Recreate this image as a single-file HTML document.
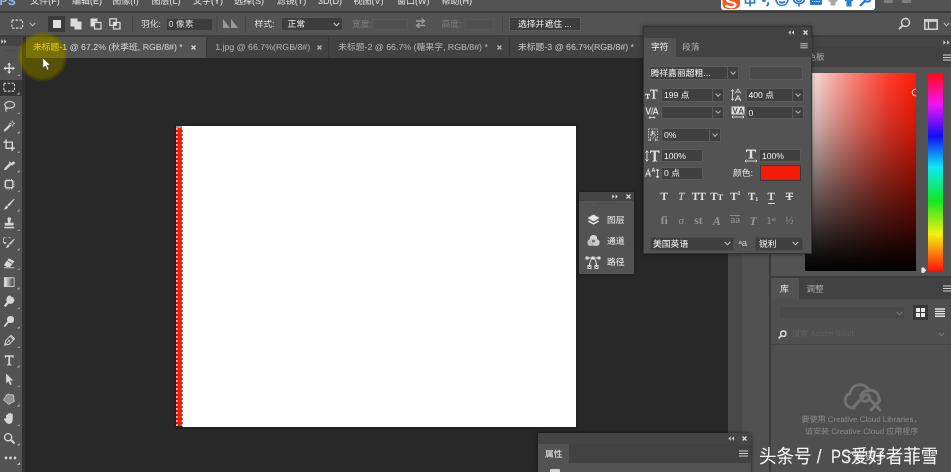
<!DOCTYPE html>
<html lang="zh-CN"><head><meta charset="utf-8"><title>Photoshop</title>
<style>
html,body{margin:0;padding:0;background:#282828;}
body{text-rendering:geometricPrecision;-webkit-font-smoothing:antialiased;width:951px;height:472px;overflow:hidden;font-family:"Liberation Sans","Noto Sans CJK SC",sans-serif;}
#app{filter:blur(0.45px);position:relative;width:951px;height:472px;overflow:hidden;background:#282828;}
.a{position:absolute;box-sizing:border-box;}
.t{white-space:nowrap;}
svg{display:inline-block;}
.fld{background:#424242;border:1px solid #666;}

</style></head>
<body>
<div id="app">
<div class="a " style="left:0px;top:0px;width:951px;height:472px;background:#282828;"></div>
<div class="a " style="left:174px;top:124px;width:404.5px;height:305px;background:#232323;"></div>
<div class="a " style="left:182px;top:126px;width:394px;height:300.6px;background:#ffffff;"></div>
<div class="a " style="left:176px;top:126.3px;width:6.2px;height:1.4px;background:#9a9a9a;"></div>
<div class="a " style="left:176px;top:127.6px;width:6.2px;height:298.9px;background:#f41d0a;"></div>
<svg class="a" style="left:175.500px;top:126.500px" width="8" height="301" viewBox="0 0 8 301"><path d="M0.900 1V301" stroke="#fff" stroke-width="1.200" stroke-dasharray="2 2" fill="none" opacity=".9"/><path d="M6.200 1V301" stroke="#ffe8e4" stroke-width="1.200" stroke-dasharray="2 2" fill="none" opacity=".85"/><path d="M0.900 3V301" stroke="#4a1008" stroke-width="1.200" stroke-dasharray="2 2" fill="none" opacity=".6"/><path d="M6.200 3V301" stroke="#5a1408" stroke-width="1.200" stroke-dasharray="2 2" fill="none" opacity=".7"/></svg>
<div class="a " style="left:0px;top:0px;width:951px;height:11px;background:#535353;"></div>
<div class="a " style="left:0px;top:11px;width:951px;height:1.5px;background:#3c3c3c;"></div>
<div class="a t" style="left:-0.500px;top:-6.500px;font-size:12px;font-weight:bold;color:#8fb8e8;line-height:14px;height:14px;letter-spacing:0.300px">PS</div>
<div class="a t " style="left:30.3px;top:-6.4px;height:14px;line-height:14px;font-size:9px;color:#e4e4e4;">文件(F)</div>
<div class="a t " style="left:72px;top:-6.4px;height:14px;line-height:14px;font-size:9px;color:#e4e4e4;">编辑(E)</div>
<div class="a t " style="left:112.3px;top:-6.4px;height:14px;line-height:14px;font-size:9px;color:#e4e4e4;">图像(I)</div>
<div class="a t " style="left:151.4px;top:-6.4px;height:14px;line-height:14px;font-size:9px;color:#e4e4e4;">图层(L)</div>
<div class="a t " style="left:193px;top:-6.4px;height:14px;line-height:14px;font-size:9px;color:#e4e4e4;">文字(Y)</div>
<div class="a t " style="left:234px;top:-6.4px;height:14px;line-height:14px;font-size:9px;color:#e4e4e4;">选择(S)</div>
<div class="a t " style="left:276.8px;top:-6.4px;height:14px;line-height:14px;font-size:9px;color:#e4e4e4;">滤镜(T)</div>
<div class="a t " style="left:318px;top:-6.4px;height:14px;line-height:14px;font-size:9px;color:#e4e4e4;">3D(D)</div>
<div class="a t " style="left:353.6px;top:-6.4px;height:14px;line-height:14px;font-size:9px;color:#e4e4e4;">视图(V)</div>
<div class="a t " style="left:397px;top:-6.4px;height:14px;line-height:14px;font-size:9px;color:#e4e4e4;">窗口(W)</div>
<div class="a t " style="left:441.6px;top:-6.4px;height:14px;line-height:14px;font-size:9px;color:#e4e4e4;">帮助(H)</div>
<div class="a " style="left:721px;top:-3px;width:154px;height:12.5px;background:#ffffff;border-radius:3px;"></div>
<svg class="a" style="left:721px;top:-8.500px" width="154" height="18" viewBox="0 0 154 18"><rect x="1.500" y="-2" width="17.500" height="19" rx="5" fill="#f4581c"/><path d="M14.500 5.500C11 3.500 5.500 4.500 6 8C6.500 11 14 9.500 14.500 12.500C15 15.500 8 16 4.500 13.500" fill="none" stroke="#fff" stroke-width="2.200"/><g fill="none" stroke="#2b78d0" stroke-width="1.700"><path d="M24.500 5H33.500V11H24.500ZM29 1V14.500"/><circle cx="43" cy="8" r="1.200" fill="#2b78d0"/><path d="M47 10Q48 12.500 45.500 14" /><circle cx="61" cy="7.500" r="6"/><path d="M58 9.500Q61 12 64 9.500"/><path d="M75.500 2.500A2.500 2.500 0 0 1 80.500 2.500V7A2.500 2.500 0 0 1 75.500 7ZM72.500 6.500Q72.500 11.500 78 11.500Q83.500 11.500 83.500 6.500M78 11.500V14.500" /><rect x="89" y="4" width="12" height="9" rx="1" fill="#2b78d0" stroke="none"/><path d="M91 7H99M91 9.500H99" stroke="#fff" stroke-width="1" stroke-dasharray="1.200 1"/></g><path d="M107 8L110 6H114L117 8L115.500 10L114.500 9.500V13.500H109.500V9.500L108.500 10Z" fill="#a8a8a8"/><path d="M123 7L126 5H130L133 7L131.500 9.500L130.500 9V14.500H125.500V9L124.500 9.500Z" fill="#2b78d0"/><path d="M139 14L144 9" stroke="#2b78d0" stroke-width="2.400" fill="none"/><circle cx="146.500" cy="6.500" r="3.200" fill="none" stroke="#2b78d0" stroke-width="2"/></svg>
<div class="a " style="left:884px;top:-2px;width:9px;height:5px;background:#8a8a8a;border-radius:1px;opacity:.8"></div>
<div class="a " style="left:902px;top:-2px;width:9px;height:5px;background:#8a8a8a;border-radius:1px;opacity:.8"></div>
<div class="a " style="left:0px;top:12.5px;width:951px;height:22.5px;background:#535353;"></div>
<div class="a " style="left:0px;top:35px;width:951px;height:2px;background:#3e3e3e;"></div>
<svg class="a" style="left:11px;top:18.5px;" width="12.5" height="10.2" viewBox="0 0 14 11"><rect x="1" y="1" width="12" height="9" fill="none" stroke="#d8d8d8" stroke-width="1.3" stroke-dasharray="2.6 1.7"/></svg>
<svg class="a" style="left:29px;top:22px;" width="7" height="5" viewBox="0 0 7 5"><path d="M0.700 0.800L3.500 3.800L6.300 0.800" fill="none" stroke="#bdbdbd" stroke-width="1.100"/></svg>
<div class="a " style="left:48px;top:15.5px;width:16.5px;height:16.5px;background:#3a3a3a;"></div>
<div class="a " style="left:52.5px;top:19.5px;width:8px;height:8px;background:#e2e2e2;"></div>
<svg class="a" style="left:70px;top:18px;" width="12" height="12" viewBox="0 0 12 12"><path d="M0.500 0.500H7.500V3.500H11.500V11.500H4.500V8.500H0.500Z" fill="#dcdcdc"/></svg>
<svg class="a" style="left:90px;top:18px;" width="12" height="12" viewBox="0 0 12 12"><path d="M0.500 0.500H7.500V3.500H4.500V8.500H0.500Z" fill="#dcdcdc"/><rect x="4.500" y="4.500" width="6.500" height="6.500" fill="none" stroke="#dcdcdc" stroke-width="1.200"/></svg>
<svg class="a" style="left:108.5px;top:18px;" width="12" height="12" viewBox="0 0 12 12"><rect x="0.800" y="0.800" width="6.500" height="6.500" fill="none" stroke="#dcdcdc" stroke-width="1.200"/><rect x="4.500" y="4.500" width="6.500" height="6.500" fill="none" stroke="#dcdcdc" stroke-width="1.200"/><rect x="4.500" y="4.500" width="2.800" height="2.800" fill="#dcdcdc"/></svg>
<div class="a " style="left:132px;top:15px;width:1px;height:18px;background:#474747;"></div>
<div class="a " style="left:215.5px;top:15px;width:1px;height:18px;background:#474747;"></div>
<div class="a " style="left:244.5px;top:15px;width:1px;height:18px;background:#474747;"></div>
<div class="a " style="left:501.5px;top:15px;width:1px;height:18px;background:#474747;"></div>
<div class="a t " style="left:141px;top:17.3px;height:14px;line-height:14px;font-size:8.8px;color:#dddddd;">羽化:</div>
<div class="a " style="left:165.5px;top:18px;width:47.5px;height:12.5px;background:#3d3d3d;border:1px solid #525252;"></div>
<div class="a t " style="left:168.5px;top:17.3px;height:14px;line-height:14px;font-size:8.8px;color:#dddddd;">0 像素</div>
<svg class="a" style="left:223px;top:19px;" width="15" height="9" viewBox="0 0 15 9"><path d="M0 0L7 9H0Z" fill="#9a9a9a"/><path d="M8 0L15 9H8Z" fill="#9a9a9a"/></svg>
<div class="a t " style="left:254.5px;top:17.3px;height:14px;line-height:14px;font-size:8.8px;color:#dddddd;">样式:</div>
<div class="a " style="left:281px;top:16.5px;width:61.5px;height:14.5px;background:#3d3d3d;border:1px solid #565656;"></div>
<div class="a t " style="left:287.5px;top:17.3px;height:14px;line-height:14px;font-size:8.8px;color:#f0f0f0;">正常</div>
<svg class="a" style="left:333px;top:21.5px;" width="7" height="5" viewBox="0 0 7 5"><path d="M0.700 0.800L3.500 3.800L6.300 0.800" fill="none" stroke="#c8c8c8" stroke-width="1.100"/></svg>
<div class="a t " style="left:352px;top:17.3px;height:14px;line-height:14px;font-size:8.8px;color:#7c7c7c;">宽度:</div>
<div class="a " style="left:372px;top:18.5px;width:36px;height:11.5px;background:#515151;border:1px solid #585858;"></div>
<svg class="a" style="left:415px;top:18px;" width="11" height="10" viewBox="0 0 11 10"><path d="M1 3H9M6.500 0.500L9.500 3L6.500 5.500M10 7.500H2M4.500 5L1.500 7.500L4.500 10" fill="none" stroke="#9a9a9a" stroke-width="1.300"/></svg>
<div class="a t " style="left:441.5px;top:17.3px;height:14px;line-height:14px;font-size:8.8px;color:#7c7c7c;">高度:</div>
<div class="a " style="left:464.5px;top:18.5px;width:29px;height:11.5px;background:#515151;border:1px solid #585858;"></div>
<div class="a " style="left:509px;top:16.5px;width:72px;height:14px;background:#3d3d3d;border:1px solid #5c5c5c;"></div>
<div class="a t " style="left:518px;top:17.3px;height:14px;line-height:14px;font-size:8.8px;color:#f2f2f2;">选择并遮住 ...</div>
<svg class="a" style="left:898px;top:17px;" width="13" height="13" viewBox="0 0 13 13"><circle cx="7.500" cy="5.500" r="4" fill="none" stroke="#d6d6d6" stroke-width="1.500"/><path d="M4.700 8.500L1 12.200" stroke="#d6d6d6" stroke-width="1.800"/></svg>
<svg class="a" style="left:923.5px;top:18.5px;" width="14" height="11" viewBox="0 0 14 11"><rect x="0.800" y="0.800" width="12.400" height="9.400" fill="none" stroke="#d6d6d6" stroke-width="1.500"/><path d="M4.500 1V10" stroke="#d6d6d6" stroke-width="1.300"/><path d="M1 2H13" stroke="#d6d6d6" stroke-width="1.600"/></svg>
<svg class="a" style="left:943px;top:22px;" width="7" height="5" viewBox="0 0 7 5"><path d="M0.700 0.800L3.500 3.800L6.300 0.800" fill="none" stroke="#bdbdbd" stroke-width="1.100"/></svg>
<div class="a " style="left:25.5px;top:37px;width:926px;height:20.5px;background:#424242;"></div>
<div class="a " style="left:26px;top:37px;width:179.5px;height:20.5px;background:#535353;"></div>
<div class="a t tab" style="left:33px;top:40.3px;height:14px;line-height:14px;font-size:8.8px;color:#d6d6d6;">未标题-1 @ 67.2% (秋季班, RGB/8#) *</div>
<svg class="a" style="left:191px;top:44.8px;" width="5" height="5" viewBox="0 0 5 5"><path d="M0.500 0.500L4.500 4.500M4.500 0.500L0.500 4.500" stroke="#d6d6d6" stroke-width="1.300"/></svg>
<div class="a t tab" style="left:215.2px;top:40.3px;height:14px;line-height:14px;font-size:8.8px;color:#b4b4b4;">1.jpg @ 66.7%(RGB/8#)</div>
<svg class="a" style="left:317px;top:44.8px;" width="5" height="5" viewBox="0 0 5 5"><path d="M0.500 0.500L4.500 4.500M4.500 0.500L0.500 4.500" stroke="#b4b4b4" stroke-width="1.300"/></svg>
<div class="a t tab" style="left:338.2px;top:40.3px;height:14px;line-height:14px;font-size:8.8px;color:#b4b4b4;">未标题-2 @ 66.7% (糖果字, RGB/8#) *</div>
<svg class="a" style="left:496.5px;top:44.8px;" width="5" height="5" viewBox="0 0 5 5"><path d="M0.500 0.500L4.500 4.500M4.500 0.500L0.500 4.500" stroke="#b4b4b4" stroke-width="1.300"/></svg>
<div class="a t tab" style="left:518px;top:40.3px;height:14px;line-height:14px;font-size:8.8px;color:#c9c9c9;">未标题-3 @ 66.7%(RGB/8#) *</div>
<svg class="a" style="left:647.5px;top:44.8px;" width="5" height="5" viewBox="0 0 5 5"><path d="M0.500 0.500L4.500 4.500M4.500 0.500L0.500 4.500" stroke="#c9c9c9" stroke-width="1.300"/></svg>
<div class="a " style="left:205.5px;top:37px;width:1px;height:20.5px;background:#383838;"></div>
<div class="a " style="left:327.7px;top:37px;width:1px;height:20.5px;background:#383838;"></div>
<div class="a " style="left:508.5px;top:37px;width:1px;height:20.5px;background:#383838;"></div>
<div class="a " style="left:0px;top:37px;width:22.5px;height:435px;background:#535353;"></div>
<div class="a " style="left:22.3px;top:36.5px;width:3.2px;height:436px;background:#303030;"></div>
<div class="a " style="left:0px;top:36.5px;width:22.5px;height:9.2px;background:#444444;"></div>
<svg class="a" style="left:0.8px;top:39.2px;" width="6" height="5" viewBox="0 0 6 5"><path d="M0.300 0.300L2.500 2.500L0.300 4.700ZM3.200 0.300L5.400 2.500L3.200 4.700Z" fill="#cfcfcf"/></svg>
<div class="a " style="left:4px;top:49.5px;width:14px;height:1px;background:#4c4c4c;"></div>
<div class="a " style="left:0px;top:79.5px;width:21.5px;height:16.5px;background:#373737;"></div>
<svg class="a" style="left:3px;top:62.3px;" width="12.4" height="12.4" viewBox="0 0 14 14"><path d="M7 0.500L9.300 3.200H7.800V6.200H10.800V4.700L13.500 7L10.800 9.300V7.800H7.800V10.800H9.300L7 13.500L4.700 10.800H6.200V7.800H3.200V9.300L0.500 7L3.200 4.700V6.200H6.200V3.200H4.700Z" fill="#d6d6d6"/></svg>
<svg class="a" style="left:17.3px;top:73.5px;" width="2.5" height="2.5" viewBox="0 0 3 3"><path d="M3 0V3H0Z" fill="#b4b4b4"/></svg>
<svg class="a" style="left:3px;top:80.8px;" width="12.4" height="12.4" viewBox="0 0 14 14"><rect x="1" y="2.500" width="12" height="9" fill="none" stroke="#d6d6d6" stroke-width="1.300" stroke-dasharray="2.600 1.700"/></svg>
<svg class="a" style="left:17.3px;top:92px;" width="2.5" height="2.5" viewBox="0 0 3 3"><path d="M3 0V3H0Z" fill="#b4b4b4"/></svg>
<svg class="a" style="left:3px;top:100.3px;" width="12.4" height="12.4" viewBox="0 0 14 14"><ellipse cx="7.500" cy="5.500" rx="5.500" ry="3.800" fill="none" stroke="#d6d6d6" stroke-width="1.400"/><path d="M3.500 8C2.500 9.500 3.500 11 4.500 10.500C5.500 10 4.500 8.500 3.500 9.500C2.500 10.500 3 12.500 4 13.500" fill="none" stroke="#d6d6d6" stroke-width="1.100"/></svg>
<svg class="a" style="left:17.3px;top:111.5px;" width="2.5" height="2.5" viewBox="0 0 3 3"><path d="M3 0V3H0Z" fill="#b4b4b4"/></svg>
<svg class="a" style="left:3px;top:119.8px;" width="12.4" height="12.4" viewBox="0 0 14 14"><path d="M1.500 12.500L8.500 5.500" stroke="#d6d6d6" stroke-width="2.400" fill="none"/><path d="M10.500 0.500V3M10.500 5V7.500M7 4H9.500M11.500 4H14M8.500 2L9.500 3M12.500 2L11.500 3M12.500 6L11.500 5" stroke="#d6d6d6" stroke-width="0.900"/></svg>
<svg class="a" style="left:17.3px;top:131px;" width="2.5" height="2.5" viewBox="0 0 3 3"><path d="M3 0V3H0Z" fill="#b4b4b4"/></svg>
<svg class="a" style="left:3px;top:139.3px;" width="12.4" height="12.4" viewBox="0 0 14 14"><path d="M3.500 0.500V10.500H13.500M0.500 3.500H10.500V13.500" fill="none" stroke="#d6d6d6" stroke-width="1.600"/></svg>
<svg class="a" style="left:17.3px;top:150.5px;" width="2.5" height="2.5" viewBox="0 0 3 3"><path d="M3 0V3H0Z" fill="#b4b4b4"/></svg>
<svg class="a" style="left:3px;top:158.8px;" width="12.4" height="12.4" viewBox="0 0 14 14"><path d="M1 13L2 10L7.500 4.500L9.500 6.500L4 12Z" fill="#d6d6d6"/><path d="M7 3L11 7" stroke="#d6d6d6" stroke-width="1.600"/><path d="M9 5L11 3A1.600 1.600 0 0 1 13.200 5.200L11.200 7.200Z" fill="#d6d6d6"/></svg>
<svg class="a" style="left:17.3px;top:170px;" width="2.5" height="2.5" viewBox="0 0 3 3"><path d="M3 0V3H0Z" fill="#b4b4b4"/></svg>
<svg class="a" style="left:3px;top:178.3px;" width="12.4" height="12.4" viewBox="0 0 14 14"><rect x="3" y="3" width="8" height="8" fill="none" stroke="#d6d6d6" stroke-width="1.300"/><path d="M4.500 1V3M7 1V3M9.500 1V3M4.500 11V13M7 11V13M9.500 11V13M1 4.500H3M1 7H3M1 9.500H3M11 4.500H13M11 7H13M11 9.500H13" stroke="#d6d6d6" stroke-width="1"/></svg>
<svg class="a" style="left:17.3px;top:189.5px;" width="2.5" height="2.5" viewBox="0 0 3 3"><path d="M3 0V3H0Z" fill="#b4b4b4"/></svg>
<svg class="a" style="left:3px;top:197.8px;" width="12.4" height="12.4" viewBox="0 0 14 14"><path d="M12.500 0.800L13.200 1.500L6.500 9.500L4.800 7.800Z" fill="#d6d6d6"/><path d="M4.200 8.500L5.800 10C5.500 12.500 3 13.200 0.800 13C2.500 12 2.200 9.500 4.200 8.500Z" fill="#d6d6d6"/></svg>
<svg class="a" style="left:17.3px;top:209px;" width="2.5" height="2.5" viewBox="0 0 3 3"><path d="M3 0V3H0Z" fill="#b4b4b4"/></svg>
<svg class="a" style="left:3px;top:217.3px;" width="12.4" height="12.4" viewBox="0 0 14 14"><path d="M5 1.500A2.200 2.200 0 0 1 9 1.500C9.300 3 8.200 4.500 8.200 6.500H12V9.500H2V6.500H5.800C5.800 4.500 4.700 3 5 1.500Z" fill="#d6d6d6"/><rect x="1.500" y="11" width="11" height="1.800" fill="#d6d6d6"/></svg>
<svg class="a" style="left:17.3px;top:228.5px;" width="2.5" height="2.5" viewBox="0 0 3 3"><path d="M3 0V3H0Z" fill="#b4b4b4"/></svg>
<svg class="a" style="left:3px;top:236.8px;" width="12.4" height="12.4" viewBox="0 0 14 14"><path d="M12.500 2L13.200 2.700L8 9L6.500 7.500Z" fill="#d6d6d6"/><path d="M6 8.200L7.300 9.500C7 11.500 5 12.500 3 12.200C4.500 11.500 4.300 9 6 8.200Z" fill="#d6d6d6"/><path d="M8.500 1.500A4.500 4.500 0 1 0 2 7.500" fill="none" stroke="#d6d6d6" stroke-width="1.100"/><path d="M0.500 5.500L2 8.200L4.200 6.200Z" fill="#d6d6d6"/></svg>
<svg class="a" style="left:17.3px;top:248px;" width="2.5" height="2.5" viewBox="0 0 3 3"><path d="M3 0V3H0Z" fill="#b4b4b4"/></svg>
<svg class="a" style="left:3px;top:256.3px;" width="12.4" height="12.4" viewBox="0 0 14 14"><path d="M6.500 2.500L13 6L8 12.500H4L1 10.200Z" fill="#d6d6d6"/><path d="M4.800 5L10.800 8.800" stroke="#535353" stroke-width="1"/><path d="M1 13.300H13" stroke="#d6d6d6" stroke-width="1"/></svg>
<svg class="a" style="left:17.3px;top:267.5px;" width="2.5" height="2.5" viewBox="0 0 3 3"><path d="M3 0V3H0Z" fill="#b4b4b4"/></svg>
<svg class="a" style="left:3px;top:275.8px;" width="12.4" height="12.4" viewBox="0 0 14 14"><defs><linearGradient id="tg" x1="0" x2="1"><stop offset="0" stop-color="#f0f0f0"/><stop offset="1" stop-color="#3c3c3c"/></linearGradient></defs><rect x="1.500" y="2" width="11" height="10" fill="url(#tg)" stroke="#d6d6d6" stroke-width="1"/></svg>
<svg class="a" style="left:17.3px;top:287px;" width="2.5" height="2.5" viewBox="0 0 3 3"><path d="M3 0V3H0Z" fill="#b4b4b4"/></svg>
<svg class="a" style="left:3px;top:295.3px;" width="12.4" height="12.4" viewBox="0 0 14 14"><path d="M6 1C8 0 9.500 1 9.500 2.500C11 2 12.500 3 12 4.500C13.500 5 13.500 7 12 7.500C11 10 8 10.500 6.500 9.500L3 13.500L1 12L4.500 8C3 6 3.500 2.500 6 1Z" fill="#d6d6d6"/></svg>
<svg class="a" style="left:17.3px;top:306.5px;" width="2.5" height="2.5" viewBox="0 0 3 3"><path d="M3 0V3H0Z" fill="#b4b4b4"/></svg>
<svg class="a" style="left:3px;top:314.8px;" width="12.4" height="12.4" viewBox="0 0 14 14"><circle cx="8.500" cy="5" r="4" fill="#d6d6d6"/><path d="M5.800 7.800L1.500 13" stroke="#d6d6d6" stroke-width="2"/></svg>
<svg class="a" style="left:17.3px;top:326px;" width="2.5" height="2.5" viewBox="0 0 3 3"><path d="M3 0V3H0Z" fill="#b4b4b4"/></svg>
<svg class="a" style="left:3px;top:334.3px;" width="12.4" height="12.4" viewBox="0 0 14 14"><path d="M2 12.500L3 7.500L8 2.500L12 6.500L7 11.500Z" fill="none" stroke="#d6d6d6" stroke-width="1.200"/><path d="M2 12.500L6.500 8" stroke="#d6d6d6" stroke-width="1"/><circle cx="7" cy="7.500" r="1" fill="#d6d6d6"/><path d="M8.500 1L13.500 6" stroke="#d6d6d6" stroke-width="1.300"/></svg>
<svg class="a" style="left:17.3px;top:345.5px;" width="2.5" height="2.5" viewBox="0 0 3 3"><path d="M3 0V3H0Z" fill="#b4b4b4"/></svg>
<svg class="a" style="left:3px;top:353.8px;" width="12.4" height="12.4" viewBox="0 0 14 14"><path d="M2 1.500H12V4.500H11C10.800 3.500 10.500 3 9.500 3H8V11C8 11.800 8.500 12 9.500 12V13H4.500V12C5.500 12 6 11.800 6 11V3H4.500C3.500 3 3.200 3.500 3 4.500H2Z" fill="#d6d6d6"/></svg>
<svg class="a" style="left:17.3px;top:365px;" width="2.5" height="2.5" viewBox="0 0 3 3"><path d="M3 0V3H0Z" fill="#b4b4b4"/></svg>
<svg class="a" style="left:3px;top:373.3px;" width="12.4" height="12.4" viewBox="0 0 14 14"><path d="M3.500 0.500L11.500 8.500H7.800L9.800 12.800L8 13.600L6 9.300L3.500 11.800Z" fill="#d6d6d6"/></svg>
<svg class="a" style="left:17.3px;top:384.5px;" width="2.5" height="2.5" viewBox="0 0 3 3"><path d="M3 0V3H0Z" fill="#b4b4b4"/></svg>
<svg class="a" style="left:3px;top:392.8px;" width="12.4" height="12.4" viewBox="0 0 14 14"><path d="M5 1.500C6.500 0.500 8 2.500 9.500 2C11.500 1.500 13 3 12 5C11.500 6.500 13.500 8 12.500 9.500C11.500 11 9.500 10 8.500 11.500C7.500 13.500 5 13 4.500 11C4 9.500 1.500 10 1 8C0.500 6 3 5.500 3 4C3 3 4 2 5 1.500Z" fill="#8f8f8f" stroke="#d6d6d6" stroke-width="1"/></svg>
<svg class="a" style="left:17.3px;top:404px;" width="2.5" height="2.5" viewBox="0 0 3 3"><path d="M3 0V3H0Z" fill="#b4b4b4"/></svg>
<svg class="a" style="left:3px;top:412.3px;" width="12.4" height="12.4" viewBox="0 0 14 14"><path d="M3.500 7.500V3.500A1 1 0 0 1 5.300 3.500V2A1 1 0 0 1 7.200 2V1.500A1 1 0 0 1 9.100 1.500V2.500A1 1 0 0 1 11 2.500V8.500C11 11.500 9.500 13.500 7 13.500C4.500 13.500 3.500 12 1.200 8.500C0.800 7.500 2 6.500 3.500 7.500Z" fill="#d6d6d6"/></svg>
<svg class="a" style="left:17.3px;top:423.5px;" width="2.5" height="2.5" viewBox="0 0 3 3"><path d="M3 0V3H0Z" fill="#b4b4b4"/></svg>
<svg class="a" style="left:3px;top:431.8px;" width="12.4" height="12.4" viewBox="0 0 14 14"><circle cx="5.800" cy="5.800" r="4" fill="none" stroke="#d6d6d6" stroke-width="1.600"/><path d="M8.800 8.800L13 13" stroke="#d6d6d6" stroke-width="2.200"/></svg>
<svg class="a" style="left:17.3px;top:443px;" width="2.5" height="2.5" viewBox="0 0 3 3"><path d="M3 0V3H0Z" fill="#b4b4b4"/></svg>
<svg class="a" style="left:3.5px;top:455.5px;" width="13" height="4" viewBox="0 0 13 4"><circle cx="2" cy="2" r="1.400" fill="#d6d6d6"/><circle cx="6.500" cy="2" r="1.400" fill="#d6d6d6"/><circle cx="11" cy="2" r="1.400" fill="#d6d6d6"/></svg>
<svg class="a" style="left:17px;top:461.5px;" width="3" height="3" viewBox="0 0 3 3"><path d="M3 0V3H0Z" fill="#bdbdbd"/></svg>
<div class="a " style="left:727.5px;top:57.5px;width:14px;height:415px;background:#494949;"></div>
<div class="a " style="left:741.5px;top:37px;width:27.5px;height:435px;background:#505050;"></div>
<div class="a " style="left:768.8px;top:37px;width:2px;height:435px;background:#3a3a3a;"></div>
<div class="a " style="left:770.6px;top:37px;width:181px;height:435px;background:#4f4f4f;"></div>
<div class="a " style="left:770.6px;top:37px;width:181px;height:10px;background:#454545;"></div>
<svg class="a" style="left:943px;top:39.5px;" width="8" height="5" viewBox="0 0 8 5"><path d="M0.400 0.300L2.800 2.500L0.400 4.700ZM4.200 0.300L6.600 2.500L4.200 4.700Z" fill="#d0d0d0"/></svg>
<div class="a " style="left:770.6px;top:47px;width:181px;height:19.5px;background:#424242;"></div>
<div class="a " style="left:771.5px;top:47px;width:32px;height:19px;background:#535353;"></div>
<div class="a t " style="left:784px;top:49.8px;height:14px;line-height:14px;font-size:8.8px;color:#dddddd;">颜色</div>
<div class="a t " style="left:807.5px;top:50.3px;height:14px;line-height:14px;font-size:8.6px;color:#a9a9a9;">色板</div>
<svg class="a" style="left:942.5px;top:53.5px;" width="9" height="7" viewBox="0 0 9 7"><path d="M0 1H9M0 3.500H9M0 6H9" stroke="#cfcfcf" stroke-width="1.100"/></svg>
<div class="a " style="left:770.6px;top:66.5px;width:181px;height:209px;background:#535353;"></div>
<div class="a" style="left:805px;top:72.500px;width:110.700px;height:198.500px;overflow:hidden;background:linear-gradient(to bottom, rgba(0,0,0,0) 0%, rgba(0,0,0,.05) 10%, rgba(0,0,0,.165) 25%, rgba(0,0,0,.37) 44%, rgba(0,0,0,.56) 60%, rgba(0,0,0,.73) 75%, rgba(0,0,0,.885) 88%, #000 100%), linear-gradient(to right, #f4eeee 0%, #f7aca4 25%, #fa7164 50%, #fd3c2d 75%, #ff1a08 100%);"><svg class="a" style="left:106px;top:15px" width="9" height="9" viewBox="0 0 9 9"><circle cx="4.500" cy="4.500" r="3.300" fill="none" stroke="#f2f2f2" stroke-width="1"/></svg></div>
<div class="a" style="left:928px;top:72.500px;width:14.500px;height:198.500px;background:linear-gradient(to bottom,#ff0a10 0%,#f512f5 15.500%,#1010f5 32%,#10e8f5 47.500%,#10e820 64.500%,#f5f010 81.500%,#ff1208 100%);"></div>
<svg class="a" style="left:920.8px;top:267.3px;" width="5.6" height="6.4" viewBox="0 0 7 8"><path d="M0.500 1.500A1 1 0 0 1 1.500 0.500H3.500L6.500 4L3.500 7.500H1.500A1 1 0 0 1 0.500 6.500Z" fill="#e6e6e6"/></svg>
<div class="a " style="left:770.6px;top:275.5px;width:181px;height:2.5px;background:#3c3c3c;"></div>
<div class="a " style="left:770.6px;top:278px;width:181px;height:20.5px;background:#424242;"></div>
<div class="a " style="left:770.6px;top:278px;width:28.5px;height:20.5px;background:#535353;"></div>
<div class="a t " style="left:780px;top:281.5px;height:14px;line-height:14px;font-size:8.8px;color:#f0f0f0;">库</div>
<div class="a t " style="left:806.3px;top:281.5px;height:14px;line-height:14px;font-size:8.8px;color:#a9a9a9;">调整</div>
<svg class="a" style="left:942.5px;top:285px;" width="9" height="7" viewBox="0 0 9 7"><path d="M0 1H9M0 3.500H9M0 6H9" stroke="#cfcfcf" stroke-width="1.100"/></svg>
<div class="a " style="left:770.6px;top:298.5px;width:181px;height:174px;background:#4f4f4f;"></div>
<div class="a " style="left:778.5px;top:305.5px;width:126.5px;height:13.5px;background:#494949;border:1px solid #505050;"></div>
<svg class="a" style="left:895.5px;top:310.5px;" width="7" height="5" viewBox="0 0 7 5"><path d="M0.700 0.800L3.500 3.800L6.300 0.800" fill="none" stroke="#7a7a7a" stroke-width="1.100"/></svg>
<div class="a " style="left:912.5px;top:304.5px;width:15.5px;height:15.5px;background:#373737;"></div>
<svg class="a" style="left:916px;top:308px;" width="9" height="9" viewBox="0 0 9 9"><path d="M0 0H4V4H0ZM5 0H9V4H5ZM0 5H4V9H0ZM5 5H9V9H5Z" fill="#e8e8e8"/></svg>
<svg class="a" style="left:934.5px;top:308px;" width="10" height="9" viewBox="0 0 10 9"><path d="M0 1H10M0 3.400H10M0 5.800H10M0 8.200H10" stroke="#e0e0e0" stroke-width="1.400"/></svg>
<svg class="a" style="left:777.5px;top:329.5px;" width="9" height="9" viewBox="0 0 9 9"><circle cx="5.300" cy="3.700" r="2.700" fill="none" stroke="#e0e0e0" stroke-width="1.300"/><path d="M3.400 5.600L0.600 8.400" stroke="#e0e0e0" stroke-width="1.500"/></svg>
<div class="a t " style="left:792px;top:326.6px;height:14px;line-height:14px;font-size:8px;color:#606060;">搜索 Adobe Stock</div>
<svg class="a" style="left:937.5px;top:331.5px;" width="7" height="5" viewBox="0 0 7 5"><path d="M0.700 0.800L3.500 3.800L6.300 0.800" fill="none" stroke="#777" stroke-width="1.100"/></svg>
<div class="a " style="left:770.6px;top:344px;width:181px;height:1px;background:#474747;"></div>
<svg class="a" style="left:843px;top:381.5px;" width="40" height="31" viewBox="0 0 40 31"><g fill="none" stroke="#727272" stroke-width="3" stroke-linecap="round" stroke-linejoin="round"><path d="M11 26H9.500A7.500 7.500 0 0 1 7 11.500A10 10 0 0 1 26 8.500A8.500 8.500 0 0 1 36 17"/><path d="M26 9C21 8 17 12 18 16C19 20 24 20 26 17.500C28 15 25 11.500 22 13L10.500 25"/><path d="M28 18.500L37 28M37 18.500L28 28"/></g></svg>
<div class="a t " style="left:801.5px;top:412.8px;height:14px;line-height:14px;font-size:8px;color:#8a8a8a;">要使用 Creative Cloud Libraries，</div>
<div class="a t " style="left:805px;top:424.7px;height:14px;line-height:14px;font-size:8px;color:#8a8a8a;">请安装 Creative Cloud 应用程序</div>
<div class="a t " style="left:843px;top:449.5px;height:14px;line-height:14px;font-size:10.8px;color:#c4c4c4;">了解更多</div>
<div class="a " style="left:579px;top:191.5px;width:54.5px;height:82px;background:#535353;box-shadow:0 0 3px rgba(0,0,0,.5);"></div>
<div class="a " style="left:579px;top:191.5px;width:54.5px;height:9.5px;background:#454545;"></div>
<svg class="a" style="left:611.5px;top:194px;" width="7" height="5" viewBox="0 0 7 5"><path d="M0.300 0.300L2.500 2.500L0.300 4.700ZM3.600 0.300L5.800 2.500L3.600 4.700Z" fill="#d6d6d6"/></svg>
<svg class="a" style="left:626px;top:194px;" width="5" height="5" viewBox="0 0 5 5"><path d="M0.500 0.500L4.500 4.500M4.500 0.500L0.500 4.500" stroke="#dcdcdc" stroke-width="1.200"/></svg>
<div class="a " style="left:597px;top:203px;width:18px;height:1px;background:#484848;"></div>
<svg class="a" style="left:586.5px;top:213.5px;" width="13" height="13" viewBox="0 0 13 13"><path d="M6.500 0.500L12.500 4L6.500 7.500L0.500 4Z" fill="#e4e4e4"/><path d="M1.500 7L6.500 10L11.500 7" fill="none" stroke="#e4e4e4" stroke-width="1.500"/></svg>
<div class="a t " style="left:607px;top:213px;height:14px;line-height:14px;font-size:8.8px;color:#f0f0f0;">图层</div>
<svg class="a" style="left:586.5px;top:234px;" width="13" height="13" viewBox="0 0 13 13"><circle cx="6.500" cy="4.500" r="3.600" fill="#d8d8d8"/><circle cx="4" cy="8.500" r="3.600" fill="#bdbdbd"/><circle cx="9" cy="8.500" r="3.600" fill="#cacaca"/><circle cx="6.500" cy="7" r="1.600" fill="#6a6a6a"/></svg>
<div class="a t " style="left:607px;top:233.6px;height:14px;line-height:14px;font-size:8.8px;color:#f0f0f0;">通道</div>
<svg class="a" style="left:584.5px;top:254.5px;" width="16" height="14" viewBox="0 0 16 14"><path d="M2 3H14" stroke="#e0e0e0" stroke-width="1"/><path d="M4.500 12C4.500 7 6 3.500 8 3.500C10 3.500 11.500 7 11.500 12" fill="none" stroke="#e0e0e0" stroke-width="1.100"/><rect x="0.500" y="1.500" width="3" height="3" fill="#e0e0e0"/><rect x="12.500" y="1.500" width="3" height="3" fill="#e0e0e0"/><rect x="6.500" y="1.500" width="3" height="3" fill="#e0e0e0"/><rect x="3" y="10.500" width="3" height="3" fill="none" stroke="#e0e0e0"/><rect x="10" y="10.500" width="3" height="3" fill="none" stroke="#e0e0e0"/></svg>
<div class="a t " style="left:607px;top:254.6px;height:14px;line-height:14px;font-size:8.8px;color:#f0f0f0;">路径</div>
<div class="a " style="left:643px;top:26px;width:168.5px;height:227.5px;background:#535353;box-shadow:0 0 4px rgba(0,0,0,.5);border:1px solid #353535;"></div>
<div class="a " style="left:644px;top:27px;width:166.5px;height:11px;background:#424242;"></div>
<svg class="a" style="left:787.5px;top:30px;" width="7" height="5" viewBox="0 0 7 5"><path d="M2.700 0.300L0.500 2.500L2.700 4.700ZM6 0.300L3.800 2.500L6 4.700Z" fill="#d6d6d6"/></svg>
<svg class="a" style="left:803px;top:30px;" width="5" height="5" viewBox="0 0 5 5"><path d="M0.500 0.500L4.500 4.500M4.500 0.500L0.500 4.500" stroke="#dcdcdc" stroke-width="1.300"/></svg>
<div class="a " style="left:643.5px;top:38px;width:168px;height:19px;background:#424242;"></div>
<div class="a " style="left:643.5px;top:38px;width:32px;height:19px;background:#535353;"></div>
<div class="a t " style="left:651px;top:40.3px;height:14px;line-height:14px;font-size:8.8px;color:#f2f2f2;">字符</div>
<div class="a t " style="left:682px;top:40.3px;height:14px;line-height:14px;font-size:8.8px;color:#a9a9a9;">段落</div>
<svg class="a" style="left:799.5px;top:43px;" width="8" height="5.5" viewBox="0 0 8 6"><path d="M0 0.800H8M0 3H8M0 5.200H8" stroke="#c8c8c8" stroke-width="1"/></svg>
<div class="a " style="left:648.5px;top:65.5px;width:79px;height:14px;background:#404040;border:1px solid #5b5b5b;"></div>
<div class="a " style="left:726.5px;top:65.5px;width:12.5px;height:14px;background:#404040;border:1px solid #5b5b5b;"></div>
<svg class="a" style="left:729.65px;top:70.5px;" width="6.2" height="4.4" viewBox="0 0 7 5"><path d="M0.700 0.800L3.500 3.800L6.300 0.800" fill="none" stroke="#b0b0b0" stroke-width="1.200"/></svg>
<div class="a t " style="left:650.5px;top:65.8px;height:14px;line-height:14px;font-size:8.8px;color:#f4f4f4;">腾祥嘉丽超粗...</div>
<div class="a " style="left:748.5px;top:65.5px;width:54.5px;height:14px;background:#4a4a4a;border:1px solid #5b5b5b;"></div>
<svg class="a" style="left:645.2px;top:88.8px;" width="13" height="10.2" viewBox="0 0 14 11"><path d="M5.500 0.500H13.500V3H12.700C12.500 2 12.200 1.700 11.300 1.700H10.500V8.800C10.500 9.500 10.900 9.700 11.700 9.700V10.500H7.300V9.700C8.100 9.700 8.500 9.500 8.500 8.800V1.700H7.700C6.800 1.700 6.500 2 6.300 3H5.500Z" fill="#dedede"/><path d="M0.300 5.200H5.300V7H4.700C4.600 6.400 4.400 6.200 3.900 6.200H3.500V9.300C3.500 9.700 3.700 9.800 4.200 9.800V10.500H1.400V9.800C1.900 9.800 2.100 9.700 2.100 9.300V6.200H1.700C1.200 6.200 1 6.400 0.900 7H0.300Z" fill="#dedede"/></svg>
<div class="a " style="left:661px;top:88px;width:52px;height:13.5px;background:#404040;border:1px solid #5b5b5b;"></div>
<div class="a " style="left:712px;top:88px;width:11.5px;height:13.5px;background:#404040;border:1px solid #5b5b5b;"></div>
<svg class="a" style="left:714.65px;top:92.75px;" width="6.2" height="4.4" viewBox="0 0 7 5"><path d="M0.700 0.800L3.500 3.800L6.300 0.800" fill="none" stroke="#b0b0b0" stroke-width="1.200"/></svg>
<div class="a t " style="left:664px;top:87.8px;height:14px;line-height:14px;font-size:8.6px;color:#f0f0f0;">199 点</div>
<svg class="a" style="left:731px;top:88px;" width="14" height="14" viewBox="0 0 14 14"><path d="M7.200 7L10.500 13H9.200L8.500 11.500H5.500L4.800 13H3.500L6.800 7ZM6 10.500H8L7 8.500Z" fill="#dedede"/><path d="M7.200 0.500L10.500 5.500H9.300L8.700 4.500H5.300L4.700 5.500H3.500L6.800 0.500ZM5.900 3.500H8.100L7 1.800Z" fill="#dedede" opacity=".8"/><path d="M1.500 2V12M0 3.500L1.500 1.500L3 3.500M0 10.500L1.500 12.500L3 10.500" fill="none" stroke="#dedede" stroke-width="0.900"/></svg>
<div class="a " style="left:745.5px;top:88px;width:47.5px;height:13.5px;background:#404040;border:1px solid #5b5b5b;"></div>
<div class="a " style="left:792px;top:88px;width:11.5px;height:13.5px;background:#404040;border:1px solid #5b5b5b;"></div>
<svg class="a" style="left:794.65px;top:92.75px;" width="6.2" height="4.4" viewBox="0 0 7 5"><path d="M0.700 0.800L3.500 3.800L6.300 0.800" fill="none" stroke="#b0b0b0" stroke-width="1.200"/></svg>
<div class="a t " style="left:748.5px;top:87.8px;height:14px;line-height:14px;font-size:8.6px;color:#f0f0f0;">400 点</div>
<svg class="a" style="left:645px;top:106.5px;" width="14" height="12" viewBox="0 0 14 12"><path d="M0.300 0.500H1.600L3.300 6L5 0.500H6.300L3.900 7.500H2.700ZM10 0.500H11.200L13.700 7.500H12.400L11.900 6H9.300L8.800 7.500H7.500ZM9.700 4.900H11.500L10.600 2.200Z" fill="#dedede"/><path d="M6 7.800L8 0.300" stroke="#dedede" stroke-width="0.800"/><path d="M4 10.500H10M5.300 9.200L4 10.500L5.300 11.800M8.700 9.200L10 10.500L8.700 11.800" fill="none" stroke="#dedede" stroke-width="0.900"/></svg>
<div class="a " style="left:661px;top:105.5px;width:52px;height:13.5px;background:#404040;border:1px solid #5b5b5b;"></div>
<div class="a " style="left:712px;top:105.5px;width:11.5px;height:13.5px;background:#404040;border:1px solid #5b5b5b;"></div>
<svg class="a" style="left:714.65px;top:110.25px;" width="6.2" height="4.4" viewBox="0 0 7 5"><path d="M0.700 0.800L3.500 3.800L6.300 0.800" fill="none" stroke="#b0b0b0" stroke-width="1.200"/></svg>
<svg class="a" style="left:731px;top:105.5px;" width="14" height="13" viewBox="0 0 14 13"><rect x="0.500" y="0.500" width="13" height="8" fill="#dedede"/><path d="M1.500 1.800H2.800L4.200 6L5.600 1.800H6.900L4.800 7.500H3.600ZM9.500 1.800H10.700L12.800 7.500H11.600L11.200 6.300H9L8.600 7.500H7.400ZM9.300 5.300H10.900L10.100 3Z" fill="#535353"/><path d="M1 11H13M2.300 9.700L1 11L2.300 12.300M11.700 9.700L13 11L11.700 12.300" fill="none" stroke="#dedede" stroke-width="0.900"/></svg>
<div class="a " style="left:745.5px;top:105.5px;width:47.5px;height:13.5px;background:#404040;border:1px solid #5b5b5b;"></div>
<div class="a " style="left:792px;top:105.5px;width:11.5px;height:13.5px;background:#404040;border:1px solid #5b5b5b;"></div>
<svg class="a" style="left:794.65px;top:110.25px;" width="6.2" height="4.4" viewBox="0 0 7 5"><path d="M0.700 0.800L3.500 3.800L6.300 0.800" fill="none" stroke="#b0b0b0" stroke-width="1.200"/></svg>
<div class="a t " style="left:748.5px;top:105.5px;height:14px;line-height:14px;font-size:8.6px;color:#f0f0f0;">0</div>
<svg class="a" style="left:646.5px;top:127.5px;" width="12" height="14" viewBox="0 0 12 14"><rect x="1.500" y="1" width="9" height="9" fill="none" stroke="#dedede" stroke-width="0.800" stroke-dasharray="1.500 1.200"/><path d="M3.500 4H8.500M5.500 2.500V5.500C5.500 8 3.500 8.500 3.500 7C3.500 5.500 8.300 5 8.300 7C8.300 8 7.500 8.500 6.800 8.600" fill="none" stroke="#dedede" stroke-width="0.900"/><path d="M1 12H4M8 12H11M3 11L4 12L3 13M9 11L8 12L9 13" fill="none" stroke="#dedede" stroke-width="0.800"/></svg>
<div class="a " style="left:661px;top:128px;width:48.5px;height:13.5px;background:#404040;border:1px solid #5b5b5b;"></div>
<div class="a " style="left:708.5px;top:128px;width:12.5px;height:13.5px;background:#404040;border:1px solid #5b5b5b;"></div>
<svg class="a" style="left:711.65px;top:132.75px;" width="6.2" height="4.4" viewBox="0 0 7 5"><path d="M0.700 0.800L3.500 3.800L6.300 0.800" fill="none" stroke="#b0b0b0" stroke-width="1.200"/></svg>
<div class="a t " style="left:664px;top:128px;height:14px;line-height:14px;font-size:8.6px;color:#f0f0f0;">0%</div>
<svg class="a" style="left:645px;top:149.5px;" width="15" height="12" viewBox="0 0 15 12"><path d="M5 0.500H14.500V3.300H13.600C13.400 2.200 13 1.800 12 1.800H10.900V9.800C10.900 10.600 11.300 10.800 12.300 10.800V11.500H7.200V10.800C8.200 10.800 8.600 10.600 8.600 9.800V1.800H7.500C6.500 1.800 6.100 2.200 5.900 3.300H5Z" fill="#dedede"/><path d="M2 1V11M0.500 2.800L2 0.800L3.500 2.800M0.500 9.200L2 11.200L3.500 9.200" fill="none" stroke="#dedede" stroke-width="0.900"/></svg>
<div class="a " style="left:661px;top:149px;width:42px;height:13px;background:#404040;border:1px solid #5b5b5b;"></div>
<div class="a t " style="left:664px;top:148.8px;height:14px;line-height:14px;font-size:8.6px;color:#f0f0f0;">100%</div>
<svg class="a" style="left:744px;top:148.500px;" width="14" height="14" viewBox="0 0 14 14"><path d="M2 0.500H12V3.300H11.100C10.900 2.200 10.500 1.800 9.500 1.800H8.200V7.800C8.200 8.600 8.600 8.800 9.600 8.800V9.500H4.400V8.800C5.400 8.800 5.800 8.600 5.800 7.800V1.800H4.500C3.500 1.800 3.100 2.200 2.900 3.300H2Z" fill="#dedede"/><path d="M1 12H13M2.500 10.700L1 12L2.500 13.300M11.500 10.700L13 12L11.500 13.300" fill="none" stroke="#dedede" stroke-width="0.900"/></svg>
<div class="a " style="left:759px;top:149px;width:42px;height:13px;background:#404040;border:1px solid #5b5b5b;"></div>
<div class="a t " style="left:762px;top:148.8px;height:14px;line-height:14px;font-size:8.6px;color:#f0f0f0;">100%</div>
<svg class="a" style="left:645px;top:166.5px;" width="15" height="13" viewBox="0 0 15 13"><path d="M3.200 1L6 9.500H4.700L4.100 7.500H1.700L1.100 9.500H0ZM2 6.500H3.800L2.900 3.500Z" fill="#dedede"/><path d="M8.700 0.500L10.300 5H9.400L9.100 4H7.700L7.400 5H6.500L8.100 0.500ZM7.900 3.300H8.900L8.400 1.800Z" fill="#dedede"/><path d="M12.500 2V11M11 4L12.500 2L14 4M11 9L12.500 11L14 9" fill="none" stroke="#dedede" stroke-width="0.900"/></svg>
<div class="a " style="left:661px;top:166.5px;width:42px;height:13px;background:#404040;border:1px solid #5b5b5b;"></div>
<div class="a t " style="left:664px;top:166.3px;height:14px;line-height:14px;font-size:8.6px;color:#f0f0f0;">0 点</div>
<div class="a t " style="left:733px;top:166.3px;height:14px;line-height:14px;font-size:8.8px;color:#e6e6e6;">颜色:</div>
<div class="a " style="left:760px;top:165px;width:41px;height:16px;background:#f51b08;border:1px solid #3a3a3a;"></div>
<div class="a t" style="left:654.2px;top:189.5px;width:20px;height:14px;line-height:14px;text-align:center;font-size:11px;color:#e2e2e2;font-family:'Liberation Serif',serif;font-weight:bold;">T</div>
<div class="a t" style="left:671.3px;top:189.5px;width:20px;height:14px;line-height:14px;text-align:center;font-size:11px;color:#e2e2e2;font-family:'Liberation Serif',serif;font-weight:bold;font-style:italic;font-weight:normal;">T</div>
<div class="a t" style="left:688.5px;top:189.5px;width:20px;height:14px;line-height:14px;text-align:center;font-size:11px;color:#e2e2e2;font-family:'Liberation Serif',serif;font-weight:bold;letter-spacing:-0.500px;">TT</div>
<div class="a t" style="left:706.7px;top:189.5px;width:20px;height:14px;line-height:14px;text-align:center;font-size:11px;color:#e2e2e2;font-family:'Liberation Serif',serif;font-weight:bold;">T<span style="font-size:8.500px">T</span></div>
<div class="a t" style="left:725.3px;top:189.5px;width:20px;height:14px;line-height:14px;text-align:center;font-size:11px;color:#e2e2e2;font-family:'Liberation Serif',serif;font-weight:bold;">T<span style="font-size:6px;position:relative;top:-4.500px">1</span></div>
<div class="a t" style="left:743.2px;top:189.5px;width:20px;height:14px;line-height:14px;text-align:center;font-size:11px;color:#e2e2e2;font-family:'Liberation Serif',serif;font-weight:bold;">T<span style="font-size:6px;position:relative;top:1.500px">1</span></div>
<div class="a t" style="left:761.2px;top:189.5px;width:20px;height:14px;line-height:14px;text-align:center;font-size:11px;color:#e2e2e2;font-family:'Liberation Serif',serif;font-weight:bold;"><span style="border-bottom:1px solid #e2e2e2;line-height:11px;display:inline-block;height:11.500px">T</span></div>
<div class="a t" style="left:779.3px;top:189.5px;width:20px;height:14px;line-height:14px;text-align:center;font-size:11px;color:#e2e2e2;font-family:'Liberation Serif',serif;font-weight:bold;"><span style="text-decoration:line-through">T</span></div>
<div class="a t" style="left:654.2px;top:214px;width:20px;height:14px;line-height:14px;text-align:center;font-size:11.5px;color:#949494;font-family:'Liberation Serif',serif;font-weight:bold;">fi</div>
<div class="a t" style="left:671.3px;top:214px;width:20px;height:14px;line-height:14px;text-align:center;font-size:11px;color:#949494;font-family:'Liberation Serif',serif;font-weight:bold;font-weight:normal;"><i>&#963;</i></div>
<div class="a t" style="left:688.5px;top:214px;width:20px;height:14px;line-height:14px;text-align:center;font-size:11.5px;color:#949494;font-family:'Liberation Serif',serif;font-weight:bold;">st</div>
<div class="a t" style="left:706.7px;top:214px;width:20px;height:14px;line-height:14px;text-align:center;font-size:12px;color:#949494;font-family:'Liberation Serif',serif;font-weight:bold;"><i>A</i></div>
<div class="a t" style="left:725.3px;top:214px;width:20px;height:14px;line-height:14px;text-align:center;font-size:11px;color:#949494;font-family:'Liberation Serif',serif;font-weight:bold;font-weight:normal;"><span style="border-top:1px solid #8a8a8a;display:inline-block;line-height:9px;height:10px;position:relative;top:-1px">aa</span></div>
<div class="a t" style="left:743.2px;top:214px;width:20px;height:14px;line-height:14px;text-align:center;font-size:12px;color:#949494;font-family:'Liberation Serif',serif;font-weight:bold;"><i>T</i></div>
<div class="a t" style="left:761.2px;top:214px;width:20px;height:14px;line-height:14px;text-align:center;font-size:11px;color:#949494;font-family:'Liberation Serif',serif;font-weight:bold;font-weight:normal;">1<span style="font-size:6.500px;position:relative;top:-3.500px">st</span></div>
<div class="a t" style="left:779.3px;top:214px;width:20px;height:14px;line-height:14px;text-align:center;font-size:11px;color:#949494;font-family:'Liberation Serif',serif;font-weight:bold;font-weight:normal;">&#189;</div>
<div class="a " style="left:649.5px;top:237px;width:84.5px;height:13.5px;background:#404040;border:1px solid #4c4c4c;"></div>
<svg class="a" style="left:723.5px;top:241.45px;" width="7" height="5" viewBox="0 0 7 5"><path d="M0.700 0.800L3.500 3.800L6.300 0.800" fill="none" stroke="#c4c4c4" stroke-width="1.100"/></svg>
<div class="a t " style="left:653px;top:237px;height:14px;line-height:14px;font-size:8.8px;color:#f4f4f4;">美国英语</div>
<div class="a t" style="left:738.500px;top:237.500px;height:12px;line-height:12px;font-size:7px;color:#cfcfcf"><span style="font-size:6px;position:relative;top:-2px">a</span><span style="font-size:9.500px">a</span></div>
<div class="a " style="left:754.5px;top:237px;width:48px;height:13.5px;background:#404040;border:1px solid #4c4c4c;"></div>
<svg class="a" style="left:792px;top:241.45px;" width="7" height="5" viewBox="0 0 7 5"><path d="M0.700 0.800L3.500 3.800L6.300 0.800" fill="none" stroke="#c4c4c4" stroke-width="1.100"/></svg>
<div class="a t " style="left:759px;top:237px;height:14px;line-height:14px;font-size:8.8px;color:#f4f4f4;">锐利</div>
<div class="a " style="left:538px;top:432.5px;width:213px;height:40px;background:#535353;box-shadow:0 0 4px rgba(0,0,0,.55);"></div>
<div class="a " style="left:538px;top:432.5px;width:213px;height:11px;background:#454545;"></div>
<svg class="a" style="left:727.5px;top:436px;" width="7" height="5" viewBox="0 0 7 5"><path d="M2.700 0.300L0.500 2.500L2.700 4.700ZM6 0.300L3.800 2.500L6 4.700Z" fill="#d6d6d6"/></svg>
<svg class="a" style="left:742px;top:436px;" width="5" height="5" viewBox="0 0 5 5"><path d="M0.500 0.500L4.500 4.500M4.500 0.500L0.500 4.500" stroke="#dcdcdc" stroke-width="1.300"/></svg>
<div class="a " style="left:538px;top:443.5px;width:213px;height:19.5px;background:#424242;"></div>
<div class="a " style="left:538px;top:443.5px;width:30.5px;height:19.5px;background:#535353;"></div>
<div class="a t " style="left:545px;top:446.5px;height:14px;line-height:14px;font-size:8.8px;color:#f0f0f0;">属性</div>
<svg class="a" style="left:738.5px;top:450px;" width="9" height="7" viewBox="0 0 9 7"><path d="M0 1H9M0 3.500H9M0 6H9" stroke="#cfcfcf" stroke-width="1.100"/></svg>
<div class="a " style="left:549.5px;top:468.5px;width:10px;height:6px;background:#d0d0d0;border-radius:1px;"></div>
<div class="a t " style="left:759px;top:443.8px;height:24px;line-height:24px;font-size:17.5px;color:#f7f7f7;transform:scaleY(1.1);transform-origin:0 50%;">头条号</div>
<div class="a t " style="left:816.8px;top:443.8px;height:24px;line-height:24px;font-size:17.5px;color:#f7f7f7;transform:scaleY(1.1);transform-origin:0 50%;">/</div>
<div class="a t " style="left:830.5px;top:443.8px;height:24px;line-height:24px;font-size:17.5px;color:#f7f7f7;transform:scale(0.86,1.1);transform-origin:0 50%;">PS</div>
<div class="a t " style="left:850.8px;top:443.8px;height:24px;line-height:24px;font-size:17.5px;color:#f7f7f7;transform:scaleY(1.1);transform-origin:0 50%;">爱好者菲雪</div>
<div class="a" style="left:16.800px;top:31px;width:51.500px;height:51px;border-radius:50%;mix-blend-mode:multiply;background:radial-gradient(circle closest-side,#fff21a 0,#fff21a 84%,#ffffff 100%);"></div>
<div class="a" style="left:16.800px;top:31px;width:51.500px;height:51px;border-radius:50%;background:radial-gradient(circle closest-side,rgba(255,235,0,.22) 0,rgba(255,235,0,.22) 82%,rgba(255,235,0,0) 100%);"></div>
<svg class="a" style="left:42px;top:57px;" width="9.3" height="14" viewBox="0 0 10 15"><path d="M0.800 0.800V12L3.600 9.600L5.600 14.200L7.600 13.300L5.600 8.800H9.200Z" fill="#f6f6f6" stroke="#333" stroke-width="0.700"/></svg>
</div>
</body></html>
